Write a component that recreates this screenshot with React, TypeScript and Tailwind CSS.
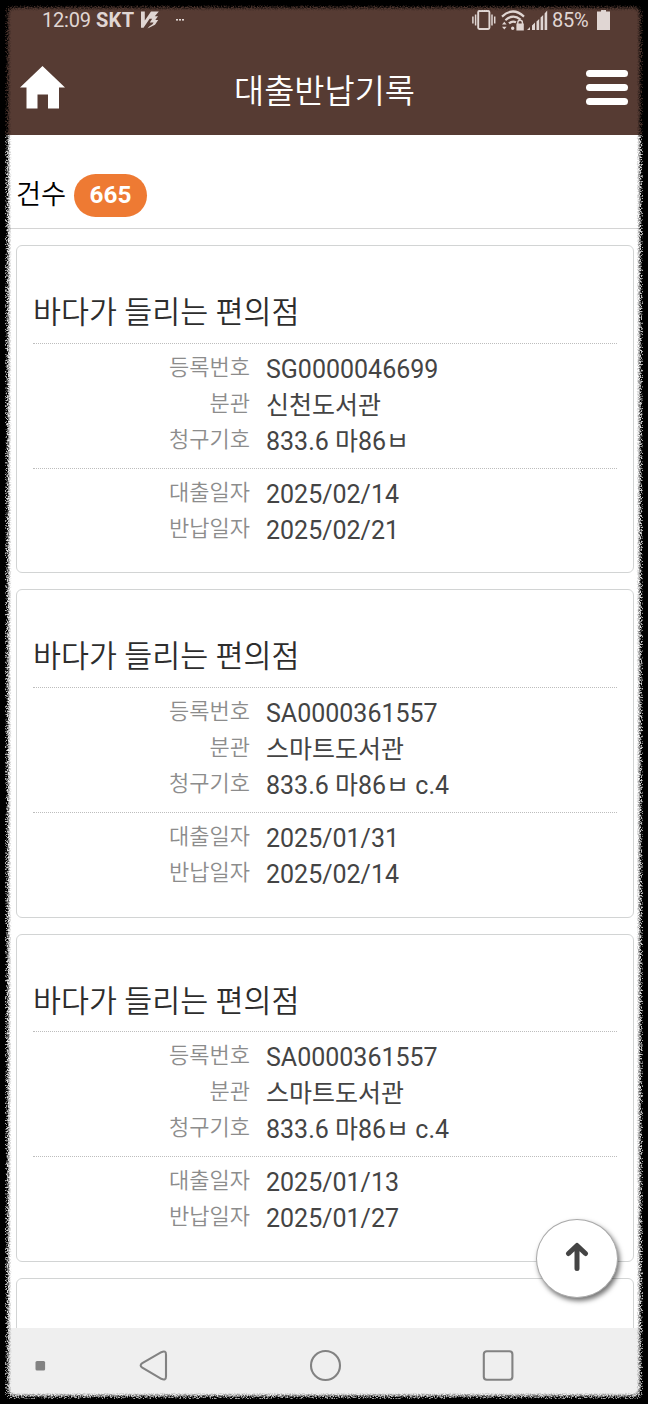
import React from "react";

type Loan = { title: string; info: [string, string][]; dates: [string, string][] };

const loans: Loan[] = [
  {
    title: "바다가 들리는 편의점",
    info: [["등록번호", "SG0000046699"], ["분관", "신천도서관"], ["청구기호", "833.6 마86ㅂ"]],
    dates: [["대출일자", "2025/02/14"], ["반납일자", "2025/02/21"]],
  },
  {
    title: "바다가 들리는 편의점",
    info: [["등록번호", "SA0000361557"], ["분관", "스마트도서관"], ["청구기호", "833.6 마86ㅂ c.4"]],
    dates: [["대출일자", "2025/01/31"], ["반납일자", "2025/02/14"]],
  },
  {
    title: "바다가 들리는 편의점",
    info: [["등록번호", "SA0000361557"], ["분관", "스마트도서관"], ["청구기호", "833.6 마86ㅂ c.4"]],
    dates: [["대출일자", "2025/01/13"], ["반납일자", "2025/01/27"]],
  },
];

function StatusBar() {
  return (
    <div className="flex h-10 items-start justify-between pt-2 pr-[38px] pl-[42px] text-[#e0d6d3]">
      <div className="flex h-6 items-center">
        <span className="w-[54px] text-[20px] leading-6 tracking-[-0.2px]">12:09</span>
        <span className="w-[44px] text-[20px] leading-6 font-bold tracking-[0.3px]">SKT</span>
        <svg width="20" height="18" viewBox="0 0 20 18" className="mt-[-1px]" fill="currentColor">
          <path d="M1 .5H4.8V9.5L11 .5H18.8L14.8 5.2H18L15.3 9H18.2L15 13.8 7.5 17.5 9.5 15.3 12.5 13.2 13.6 11.4H9.8L12.2 7.8H9.4L12 4.2 3.5 16.8H1Z" />
        </svg>
        <svg width="10" height="4" viewBox="0 0 10 4" className="ml-[15px]" fill="currentColor">
          <rect x="1" y="1" width="2" height="1.6" /><rect x="4" y="1" width="2" height="1.6" /><rect x="7" y="1" width="2" height="1.6" />
        </svg>
      </div>
      <div className="flex h-6 items-center">
        <svg width="24" height="20" viewBox="0 0 24 20" fill="none" stroke="currentColor">
          <rect x="6.2" y="1" width="11.2" height="18" rx="1.2" strokeWidth="1.9" />
          <path d="M.9 6.5V13.5M3.6 4.5V15.5M20 4.5V15.5M22.7 6.5V13.5" strokeWidth="1.5" />
        </svg>
        <svg width="24" height="21" viewBox="0 0 24 21" className="ml-[5px]" fill="none" stroke="currentColor">
          <path d="M1 6.6Q12 -3.6 23 6.6M4.4 10.2Q12 3.4 19.6 9.6M8 13.4Q11.5 10.2 15 12.4" strokeWidth="2.2" />
          <path d="M1 14.5 3.3 11.7 5.6 14.5ZM1 16.7 3.3 19.5 5.6 16.7ZM10 18.2a1.7 1.7 0 1 0 3.4 0 1.7 1.7 0 1 0-3.4 0M15.4 13.6h7.4v6.8h-7.4z" fill="currentColor" stroke="none" />
          <path d="M16.8 14V12.6a2.3 2.3 0 0 1 4.6 0V14" strokeWidth="1.4" />
        </svg>
        <svg width="21" height="20" viewBox="0 0 21 20" className="ml-[2px]" fill="currentColor">
          <path d="M0 20 3 17V20ZM5 15.5 8 12.5V20H5ZM9.5 11.5 12.2 9V20H9.5ZM13.6 7.5 16.2 5V20H13.6ZM17.6 3.5 20.2.5V20H17.6Z" />
        </svg>
        <span className="ml-[4px] w-[45px] text-[20px] leading-6 tracking-[-0.3px]">85%</span>
        <svg width="13" height="20" viewBox="0 0 13 20" fill="currentColor">
          <path d="M4 0H9V1.5H13V20H0V1.5H4Z" />
        </svg>
      </div>
    </div>
  );
}

function Header() {
  return (
    <header className="h-[135px] shrink-0 bg-[#563b33]">
      <StatusBar />
      <div className="flex h-[95px] items-center justify-between pr-5 pl-5">
        <svg width="45" height="43" viewBox="0 0 45 43" fill="white">
          <path d="M22.5 0 45 21.5H39V42.5H28V28.5H17.5V42.5H6.5V21.5H0Z" />
        </svg>
        <h1 className="pt-[9px] pr-[2px] text-[32.8px] leading-[48px] font-[350] text-white">대출반납기록</h1>
        <div className="mb-[1px] flex w-[42px] flex-col gap-[7px]">
          <span className="h-[7px] rounded-full bg-white" />
          <span className="h-[7px] rounded-full bg-white" />
          <span className="h-[7px] rounded-full bg-white" />
        </div>
      </div>
    </header>
  );
}

function Row({ label, value }: { label: string; value: string }) {
  return (
    <div className="flex h-9 items-center">
      <dt className="w-[217px] text-right text-[22px] leading-8 font-[350] text-[#8c8c8c]">{label}</dt>
      <dd className="pt-[4px] pl-[16px] text-[25px] leading-8 text-[#444444]">{value}</dd>
    </div>
  );
}

function LoanCard({ loan }: { loan: Loan }) {
  return (
    <article className="h-[328.3px] shrink-0 rounded-[6px] border border-[#d2d4d4] px-4">
      <h2 className="flex h-[96.6px] items-end pb-[7.6px] text-[30.4px] leading-[44px] font-[350] text-[#2d2d2d]">{loan.title}</h2>
      <dl className="border-t border-dotted border-[#bdbdbd] pt-[6px] pb-[10px]">
        {loan.info.map(([l, v]) => <Row key={l} label={l} value={v} />)}
      </dl>
      <dl className="border-t border-dotted border-[#bdbdbd] pt-[6px]">
        {loan.dates.map(([l, v]) => <Row key={l} label={l} value={v} />)}
      </dl>
    </article>
  );
}

function NavigationBar() {
  return (
    <nav className="flex h-[76px] shrink-0 items-start bg-[#efefef] pt-[20px] pl-[35px]">
      <svg width="490" height="36" viewBox="0 0 490 36" fill="none" stroke="#828282" strokeWidth="2.1">
        <rect x=".5" y="13" width="9.6" height="9.6" rx="1.5" fill="#828282" stroke="none" />
        <path d="M107.3 15.2 126.3 4.2Q131 2 131 6.5V28.5Q131 33 126.3 30.8L107.3 19.6Q104 17.4 107.3 15.2Z" />
        <circle cx="290.5" cy="17.5" r="14.5" />
        <rect x="448.8" y="3.2" width="28.6" height="28.6" rx="3" />
      </svg>
    </nav>
  );
}

function TornFrame() {
  return (
    <svg className="pointer-events-none absolute inset-0" width="648" height="1404" viewBox="0 0 648 1404">
      <defs>
        <filter id="torn" filterUnits="userSpaceOnUse" x="-20" y="-20" width="688" height="1444" colorInterpolationFilters="sRGB">
          <feGaussianBlur in="SourceAlpha" stdDeviation="2.7" result="soft" />
          <feTurbulence type="fractalNoise" baseFrequency="0.7" numOctaves="2" seed="7" />
          <feColorMatrix type="matrix" values="0 0 0 0 0  0 0 0 0 0  0 0 0 0 0  3 0 0 0 -1" result="noise" />
          <feComposite in="soft" in2="noise" operator="arithmetic" k1="1.7" k2="0.4" k3="0" k4="0" />
          <feComponentTransfer>
            <feFuncA type="linear" slope="1.2" intercept="-0.05" />
          </feComponentTransfer>
        </filter>
      </defs>
      <path filter="url(#torn)" fillRule="evenodd" d="M-20-20H668V1424H-20ZM13 6.5H635Q641 6.5 641 14V1390Q641 1397 635 1397H13Q7 1397 7 1390V14Q7 6.5 13 6.5Z" />
      <path fillRule="evenodd" d="M0 0H648V1404H0ZM11 5.5H637Q643 5.5 643 12V1393Q643 1399 637 1399H11Q5 1399 5 1393V12Q5 5.5 11 5.5Z" />
    </svg>
  );
}

export default function App() {
  return (
    <div className="relative flex h-[1404px] w-[648px] flex-col overflow-hidden bg-white font-['Roboto','Noto_Sans_CJK_KR',sans-serif]">
      <Header />
      <section className="flex h-[94px] shrink-0 items-start border-b border-[#d4d4d4] pt-[39px] pl-4">
        <span className="w-[58px] pt-[2px] text-[27.3px] leading-[38px] font-[350] text-black">건수</span>
        <span className="flex h-[43px] w-[73px] items-center justify-center rounded-full bg-[#ee7a33] pb-[2px] text-[24.3px] leading-[35px] font-bold text-white">665</span>
      </section>
      <main className="flex min-h-0 flex-1 flex-col gap-4 overflow-hidden pt-4 pr-[14px] pl-4">
        {loans.map((loan, i) => <LoanCard key={i} loan={loan} />)}
        <div className="h-[328px] shrink-0 rounded-[6px] border border-[#d2d4d4]" />
      </main>
      <NavigationBar />
      <button aria-label="맨 위로" className="absolute top-[1219px] left-[536px] flex h-[79px] w-[82px] items-center justify-center rounded-[50%] border border-[#a9a9a9] bg-white shadow-[2px_3px_5px_rgba(0,0,0,0.55)]">
        <svg width="24" height="30" viewBox="0 0 24 30" fill="none" stroke="#444" strokeWidth="5" strokeLinecap="round" strokeLinejoin="round" className="mt-[-3px]">
          <path d="M12 26.5V4M3.5 11.5 12 3.5 20.5 11.5" />
        </svg>
      </button>
      <TornFrame />
    </div>
  );
}
